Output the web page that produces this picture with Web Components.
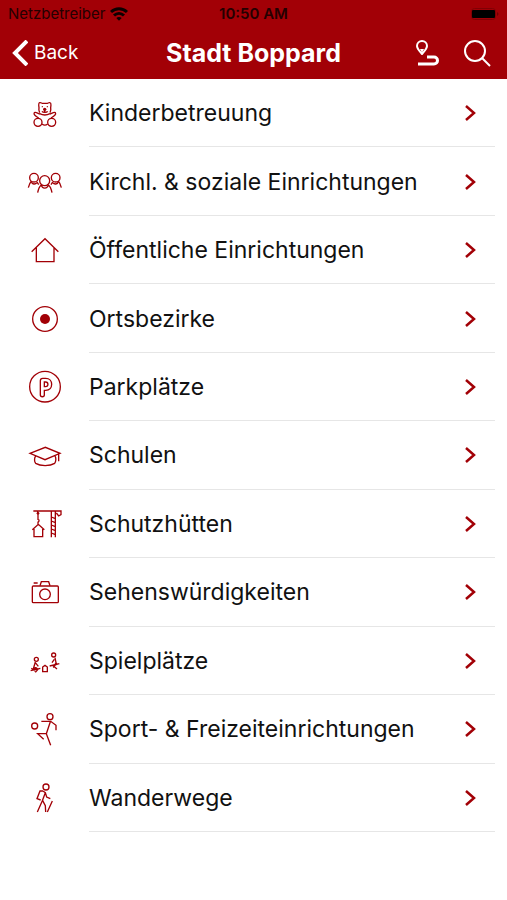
<!DOCTYPE html>
<html lang="de">
<head>
<meta charset="utf-8">
<meta name="viewport" content="width=device-width, initial-scale=1">
<title>Stadt Boppard</title>
<style>
  body {
    margin: 0;
    background: #fff;
    color: #111;
    font-family: Inter, "Liberation Sans", sans-serif;
    --brand: #a20006;
  }
</style>
</head>
<body>
<city-app></city-app>

<script>
const ICONS = {
  bear: `<svg viewBox="24 3 132 132">
    <path d="M74 68c-3-5-3-10-2-15-1-6-2-14 2-15 4-1 5 1 8 2h15c3-1 5-3 8-2 4 1 3 9 2 15 1 5 1 10-2 15"/>
    <path d="M74 72c-7-2-11-7-16-4-4 5 4 11 13 16M105 72c7-2 11-7 16-4 4 5-4 11-13 16M74 71c10 5 21 5 31 0M81 102c5 4 12 4 17 0"/>
    <circle cx="69" cy="97" r="12"/><circle cx="110" cy="97" r="12"/>
    <path d="M81 64c3 4 14 4 17 0M89 60v6"/><circle class="fill" cx="89" cy="58" r="5"/>
    <circle class="fill" cx="82" cy="50" r="2"/><circle class="fill" cx="97" cy="50" r="2"/></svg>`,
  people: `<svg viewBox="24 6 132 132">
    <circle cx="89" cy="68" r="15"/><circle cx="57" cy="59" r="13"/><circle cx="122" cy="59" r="13"/>
    <path d="M79 80c2 14 18 14 21 0M78 82c-6 5-8 13-10 22M101 82c6 5 8 13 10 22M49 70c-5 5-7 11-9 19M130 70c5 5 7 11 9 19M49 70c2 10 12 10 17 4M130 70c-2 10-12 10-17 4M66 72l5 8M113 72l-5 8"/></svg>`,
  house: `<svg viewBox="24 9 132 132">
    <path d="M50 80L90 41L130 80M64 68V110H117V68"/></svg>`,
  dot: `<svg viewBox="24 215 132 132">
    <circle cx="90" cy="281" r="37"/><circle class="fill" cx="90" cy="281" r="15"/></svg>`,
  parking: `<svg viewBox="24 9 132 132">
    <circle cx="90" cy="74" r="46"/>
    <path d="M76 99V56c0-5 3-7 7-7h9c24 0 24 36 0 36h-4v14c0 7-12 7-12 0zM88 60v14h4c9 0 9-14 0-14z"/></svg>`,
  cap: `<svg viewBox="24 9 132 132">
    <path d="M45 70L91 52L135 70L90 89ZM62 78c-5 6-4 18 0 22 14 9 43 9 57 0 4-5 5-16 1-22M131 72V94"/></svg>`,
  crane: `<svg viewBox="24 5 132 132">
    <path d="M55 32H138V43L131 47L124 38M68 33V40M69 40v17c5 1 4 9-2 9M69 67v5M52 88L70 72L88 88M57 86V109H83V86M109 34V111M121 34V111M109 50l12 5M109 62l12 5M109 74l12 5M109 86l12 5M109 98l12 5"/>
    <circle class="fill" cx="69" cy="39" r="4"/></svg>`,
  camera: `<svg viewBox="24 6 132 132">
    <rect x="52" y="54" width="78" height="50" rx="3"/><circle cx="90" cy="79" r="16"/>
    <path d="M75 53l4-12h22l4 12M56 45h12"/></svg>`,
  seesaw: `<svg viewBox="24 211 132 132">
    <circle cx="64" cy="272" r="6"/><circle cx="116" cy="259" r="6"/>
    <path d="M61 280L54 304M61 282L70 293M47 306L76 299M104 292L133 285M49 299l12 9M54 304c6-9 10-9 14-1l-7 8M120 267l4 20M118 272l-7 10M113 290l13 11M122 287l-7 10M83 309V295l7-5 7 5V309Z"/>
    <circle class="fill" cx="61" cy="300" r="4"/><circle class="fill" cx="123" cy="286" r="4"/></svg>`,
  sport: `<svg viewBox="24 9 132 132">
    <circle cx="59" cy="66" r="9"/><circle cx="105" cy="38" r="9"/>
    <path d="M79 52H107L123 64V79M106 53L94 89L107 124M94 89H68L86 106"/></svg>`,
  hiker: `<svg viewBox="24 213 132 132">
    <circle cx="93" cy="246" r="9"/>
    <path d="M84 258H75L66 281L77 285M84 258L91 263L82 287L67 321M91 263L95 276L106 281M83 287L91 302L92 321M112 288L97 321"/></svg>`
};

const ENTRIES = [
  ["bear", "Kinderbetreuung"],
  ["people", "Kirchl. &amp; soziale Einrichtungen"],
  ["house", "Öffentliche Einrichtungen"],
  ["dot", "Ortsbezirke"],
  ["parking", "Parkplätze"],
  ["cap", "Schulen"],
  ["crane", "Schutzhütten"],
  ["camera", "Sehenswürdigkeiten"],
  ["seesaw", "Spielplätze"],
  ["sport", "Sport- &amp; Freizeiteinrichtungen"],
  ["hiker", "Wanderwege"]
];

class StatusBar extends HTMLElement {
  constructor() {
    super();
    this.attachShadow({ mode: "open" });
    this.shadowRoot.innerHTML = `
      <style>
        :host {
          display: grid;
          grid-template-columns: 1fr auto 1fr;
          align-items: center;
          height: 27px;
          padding: 0 8px;
          font-size: 15px;
          line-height: 20px;
          color: #240001;
        }
        .carrier { display: flex; align-items: center; gap: 5px; }
        .time { font-weight: 600; }
        .battery { justify-self: end; }
        svg { display: block; }
      </style>
      <div class="carrier">
        <span>Netzbetreiber</span>
        <svg width="18" height="14" viewBox="0 0 18 14" fill="none" stroke="#0d0000" stroke-width="3" aria-hidden="true">
          <path d="M1 5C5.500.6 12.500.6 17 5M4 8.500c3-2.800 7-2.800 10 0"/>
          <path d="M6.300 11c1.600-1.300 3.800-1.300 5.400 0L9 13.800z" fill="#0d0000" stroke="none"/>
        </svg>
      </div>
      <span class="time">10:50 AM</span>
      <svg class="battery" width="28" height="12" viewBox="0 0 28 12" aria-hidden="true">
        <rect x=".5" y=".5" width="24" height="11" rx="3" fill="none" stroke="#800004"/>
        <rect x="1" y="2" width="23" height="8" rx="1" fill="#000"/>
        <path d="M26 4c2 1 2 3 0 4z" fill="#700003"/>
      </svg>
    `;
  }
}

class NavBar extends HTMLElement {
  constructor() {
    super();
    this.attachShadow({ mode: "open" });
    this.shadowRoot.innerHTML = `
      <style>
        :host {
          display: grid;
          grid-template-columns: 1fr auto 1fr;
          align-items: center;
          height: 52px;
          padding: 0 12px;
          color: #fff;
        }
        button {
          display: flex;
          align-items: center;
          gap: 6px;
          margin: 0;
          padding: 0;
          border: 0;
          background: none;
          color: inherit;
          font: inherit;
          font-size: 19px;
          line-height: 28px;
          cursor: pointer;
        }
        h1 {
          margin: 0;
          font-size: 25px;
          line-height: 32px;
          font-weight: 700;
          white-space: nowrap;
        }
        .actions { display: flex; justify-content: flex-end; gap: 24px; padding-right: 4px; }
        svg { display: block; fill: none; stroke: currentColor; }
      </style>
      <button type="button">
        <svg width="16" height="26" viewBox="0 0 16 26" stroke-width="4" aria-hidden="true"><path d="M15 1L3 13L15 25"/></svg>
        <span>Back</span>
      </button>
      <h1><slot></slot></h1>
      <div class="actions">
        <button type="button" aria-label="Route">
          <svg width="26" height="28" viewBox="0 0 26 28" stroke-width="2" aria-hidden="true">
            <path d="M9 15C6 11.500 4 9.500 4 7a5 5 0 0 1 10 0c0 2.500-2 4.500-5 8z" stroke-linejoin="round"/>
            <path d="M7 10h4l-2 4z" fill="currentColor" stroke="none"/>
            <path d="M14 18h7a3 3 0 0 1 0 7H5" stroke-width="3"/>
          </svg>
        </button>
        <button type="button" aria-label="Suche">
          <svg width="28" height="28" viewBox="0 0 28 28" stroke-width="2" aria-hidden="true">
            <circle cx="12" cy="12" r="10"/><path d="M19 19L27 27"/>
          </svg>
        </button>
      </div>
    `;
  }
}

class CategoryRow extends HTMLElement {
  constructor() {
    super();
    this.attachShadow({ mode: "open" });
  }

  connectedCallback() {
    const icon = ICONS[this.getAttribute("icon")] || "";

    this.shadowRoot.innerHTML = `
      <style>
        :host { display: flex; }
        a {
          flex: 1;
          display: flex;
          align-items: stretch;
          padding: 0 12px 0 23px;
          gap: 22px;
          color: inherit;
          text-decoration: none;
        }
        .icon { display: flex; align-items: center; }
        .icon svg {
          width: 44px;
          height: 44px;
          fill: none;
          stroke: var(--brand);
          stroke-width: 4;
        }
        .icon .fill { fill: var(--brand); stroke: none; }
        .body {
          flex: 1;
          display: flex;
          align-items: center;
          justify-content: space-between;
          padding: 1px 19px 0 0;
          border-bottom: 1px solid #e6e6e6;
          font-size: 23px;
          line-height: 32px;
          white-space: nowrap;
        }
        .chevron { fill: none; stroke: var(--brand); stroke-width: 2.5; }
      </style>
      <a href="#">
        <span class="icon" aria-hidden="true">${icon}</span>
        <span class="body">
          <span><slot></slot></span>
          <svg class="chevron" width="12" height="18" viewBox="0 0 12 18" aria-hidden="true"><path d="M2 2L10 9L2 16"/></svg>
        </span>
      </a>
    `;
  }
}

class CityApp extends HTMLElement {
  constructor() {
    super();
    this.attachShadow({ mode: "open" });
    this.shadowRoot.innerHTML = `
      <style>
        :host {
          display: flex;
          flex-direction: column;
          min-height: 100vh;
        }
        header { background: var(--brand); }
        main { flex: 1; display: flex; padding-bottom: 68px; }
        ul {
          flex: 1;
          display: grid;
          grid-auto-rows: minmax(56px, 1fr);
          margin: 0;
          padding: 0;
          list-style: none;
        }
        li { display: grid; }
      </style>
      <header>
        <status-bar></status-bar>
        <nav-bar>Stadt Boppard</nav-bar>
      </header>
      <main>
        <ul>
          ${ENTRIES.map(([icon, label]) => `<li><category-row icon="${icon}">${label}</category-row></li>`).join("")}
        </ul>
      </main>
    `;
  }
}

customElements.define("status-bar", StatusBar);
customElements.define("nav-bar", NavBar);
customElements.define("category-row", CategoryRow);
customElements.define("city-app", CityApp);
</script>
</body>
</html>
